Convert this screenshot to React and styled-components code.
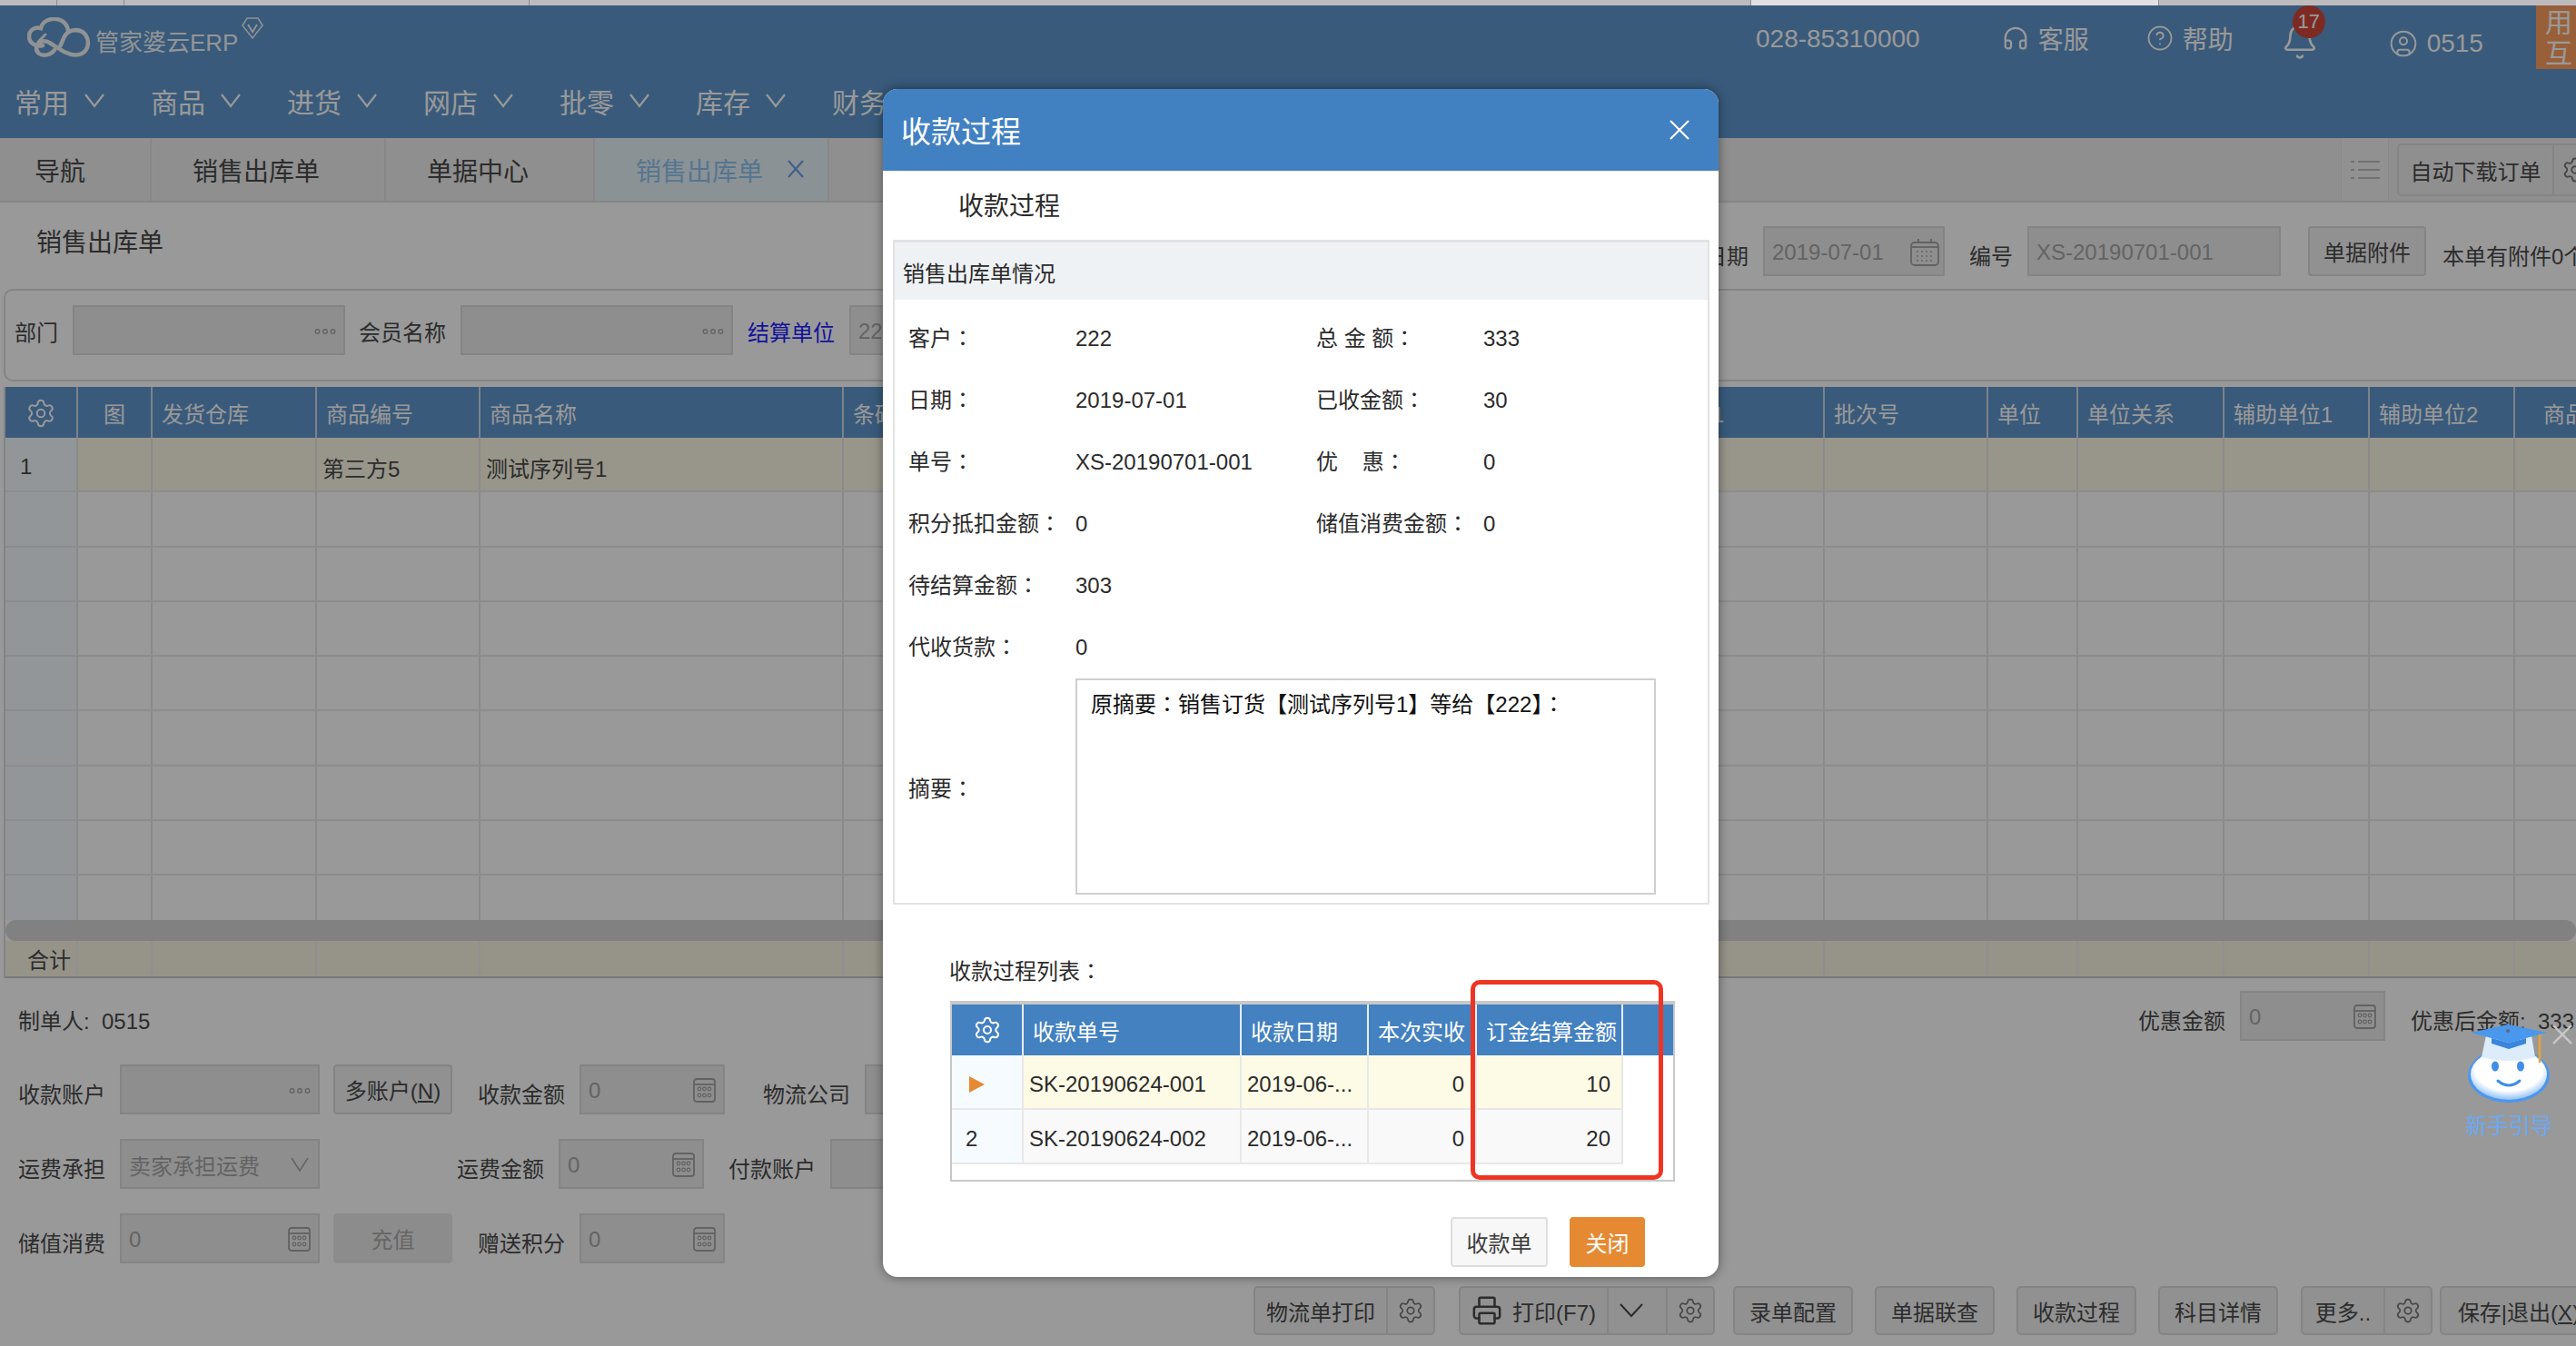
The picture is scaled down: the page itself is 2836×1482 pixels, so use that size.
import React from "react";
import styled, { createGlobalStyle, css } from "styled-components";
import { Settings, Headphones, CircleHelp, Bell, CircleUser, Printer } from "lucide-react";

const Global = createGlobalStyle`
  html, body { margin: 0; padding: 0; background: #fff; }
  * { box-sizing: border-box; }
  body { font-family: "Liberation Sans", "Noto Sans CJK SC", sans-serif; font-size: 24px; color: #4a4a4a; }
`;

const Screen = styled.div`
  width: 2836px; height: 1482px; overflow: hidden; display: flex; flex-direction: column;
`;
const TopStrip = styled.div`
  height: 6px; flex: none; display: flex; background: #bdbbbe;
`;
const StripTab = styled.div`
  width: ${p => p.$w}px; flex: none; border-right: 1px solid #8e8c90; background: ${p => (p.$light ? "#e2e0e2" : "transparent")};
`;
const Page = styled.div`
  position: relative; flex: 1; overflow: hidden; background: #fff; white-space: nowrap;
`;
const Overlay = styled.div`
  position: absolute; inset: 0; background: rgba(0, 0, 0, 0.4); z-index: 10;
`;

/* header */
const Header = styled.header`
  height: 146px; background: #5f96cd; color: #fff; display: flex; flex-direction: column;
`;
const HeaderTop = styled.div`
  height: 74px; display: flex; align-items: flex-start; position: relative;
`;
const Logo = styled.div`
  display: flex; align-items: flex-start; margin-left: 30px; padding-top: 13px; width: 270px;
`;
const LogoText = styled.span`
  font-size: 26px; margin: 7px 0 0 5px; color: #f4f8fb;
`;
const LogoBadge = styled.svg`
  margin: 0 0 0 4px; flex: none;
`;
const HeaderRight = styled.div`
  margin-left: auto; display: flex; align-items: flex-start; width: 903px; height: 70px;
`;
const HeaderItem = styled.div`
  display: flex; align-items: center; gap: ${p => p.$gap || 10}px; margin-left: ${p => p.$ml}px; margin-top: ${p => p.$mt || 17}px; font-size: 28px; position: relative; flex: none;
`;
const Badge = styled.span`
  position: absolute; left: 13px; top: -19px; width: 36px; height: 36px; border-radius: 50%; background: #d0483a; color: #fff; font-size: 22px; display: flex; align-items: center; justify-content: center;
`;
const Orange = styled.div`
  margin-left: auto; width: 44px; height: 70px; background: #ff9f5e; flex: none; overflow: hidden; font-size: 30px; line-height: 34px; padding: 2px 0 0 10px; white-space: normal; word-break: break-all; color: #fff;
`;
const Nav = styled.nav`
  height: 72px; display: flex; align-items: center; padding: 0 0 10px 16px;
`;
const NavItem = styled.div`
  width: 150px; flex: none; display: flex; align-items: center; gap: 17px; font-size: 30px;
`;

/* tabs */
const Tabs = styled.div`
  height: 71px; display: flex; background: #eee; border-bottom: 2px solid #dedede;
`;
const Tab = styled.div`
  position: relative; display: flex; align-items: center; font-size: 28px; color: ${p => (p.$active ? "#8fc4ee" : "#4a4a4a")}; padding: 0 71px 0 ${p => (p.$first ? 38 : 45)}px; border-right: 2px solid #e2e2e2; background: ${p => (p.$active ? "#e6f3fa" : "transparent")};
`;
const TabClose = styled.svg`
  position: absolute; right: 26px; top: 24px;
`;
const TabTools = styled.div`
  margin-left: auto; display: flex; width: 259px; flex: none; align-items: stretch;
`;
const ToolCell = styled.div`
  width: 53px; flex: none; background: #f2f2f2; display: flex; align-items: center; justify-content: center; border-left: 1px solid #e4e4e4; border-right: 1px solid #e4e4e4;
`;
const AutoButton = styled.div`
  margin: 6px 0 0 9px; height: 58px; flex: none; width: 210px; display: flex; border: 2px solid #dcdcdc; border-radius: 5px; font-size: 24px; color: #4a4a4a;
`;
const AutoLabel = styled.div`
  width: 171px; flex: none; display: flex; align-items: center; justify-content: center; border-right: 2px solid #dcdcdc;
`;
const AutoGear = styled.div`
  display: flex; align-items: center; padding-left: 8px;
`;

/* title */
const TitleRow = styled.div`
  height: 95px; display: flex; align-items: flex-start;
`;
const PageTitle = styled.div`
  margin: 28px 0 0 40px; font-size: 28px; line-height: 34px;
`;
const TitleRight = styled.div`
  margin-left: auto; width: 959px; flex: none; display: flex; align-items: center; padding-top: 26px; overflow: hidden;
`;
const FieldLabel = styled.span`
  flex: none; font-size: 24px; margin-top: 8px; margin-left: ${p => p.$ml || 0}px; margin-right: ${p => p.$mr ?? 16}px; color: ${p => (p.$link ? "#1f1fff" : "#4a4a4a")}; width: ${p => (p.$w ? p.$w + "px" : "auto")};
`;
const Field = styled.div`
  flex: none; width: ${p => p.$w}px; height: 55px; display: flex; align-items: center; justify-content: space-between; padding: 2px ${p => p.$pr || 8}px 0 8px; background: #ededed; border: 2px solid #dcdcdc; color: #a6a6a6; font-size: 24px; overflow: hidden;
`;
const PlainButton = styled.div`
  flex: none; width: ${p => p.$w}px; height: ${p => p.$h || 55}px; margin-left: ${p => p.$ml || 0}px; display: flex; align-items: center; justify-content: center; gap: ${p => p.$gap || 0}px; background: ${p => (p.$disabled ? "#eaeaea" : "#f2f2f2")}; border: 2px solid ${p => (p.$disabled ? "#eaeaea" : "#dcdcdc")}; border-radius: 4px; color: ${p => (p.$disabled ? "#aaa" : "#4a4a4a")}; font-size: 24px;
`;
const Hotkey = styled.span`
  text-decoration: underline;
`;

/* filter */
const FilterBox = styled.div`
  margin-left: 4px; height: 102px; display: flex; align-items: flex-start; padding: 16px 0 0 10px; border: 2px solid #dcdcdc; border-right: 0; border-radius: 10px 0 0 10px;
  & > span { margin-top: 11px; }
`;

/* data grid */
const gridColumns = css`
  display: grid; grid-template-columns: 80px 82px 181px 180px 400px 874px 206px 180px 99px 161px 160px 160px 120px;
`;
const DataGrid = styled.div`
  margin: 6px 0 0 4px; border-left: 2px solid #dcdcdc;
`;
const DataHead = styled.div`
  ${gridColumns}; height: 56px; background: #5f96cd; color: #fff;
`;
const HeadCell = styled.div`
  border-right: 2px solid #cfd9e4; display: flex; align-items: center; justify-content: ${p => (p.$center ? "center" : "flex-start")}; padding-left: ${p => (p.$center ? 0 : p.$pl || 10)}px; font-size: 24px; overflow: hidden; white-space: nowrap; padding-top: 1px;
`;
const DataBody = styled.div`
  height: 531px; overflow: hidden;
`;
const DataRow = styled.div`
  ${gridColumns}; height: 60.3px; border-bottom: 2px solid #e9e9e9; background: ${p => (p.$selected ? "#fdfbe6" : "#fff")};
`;
const DataCell = styled.div`
  border-right: 2px solid #e6e6e6; display: flex; align-items: center; padding: 6px 0 0 ${p => p.$pl ?? 3}px; font-size: 24px; background: ${p => (p.$index ? "#f5fbff" : "transparent")};
`;
const ScrollBar = styled.div`
  height: 23px; border-radius: 12px; background: #d8d8d8;
`;
const DataFoot = styled.div`
  ${gridColumns}; height: 41px; background: #fbf5e5; border-bottom: 2px solid #c8c8c8;
`;
const FootCell = styled.div`
  border-right: 2px solid #eee; display: flex; align-items: center; padding-left: ${p => p.$pl || 0}px; font-size: 24px; overflow: visible;
`;

/* form */
const FormTop = styled.div`
  margin-top: 14px; display: flex; align-items: center; height: 55px; padding-left: 20px;
`;
const Maker = styled.span`
  font-size: 24px; margin-top: 8px; flex: none; width: 2334px;
`;
const FormRow = styled.div`
  margin-top: ${p => p.$mt ?? 27}px; display: flex; align-items: center; height: 55px; padding-left: 20px;
`;
const ActionBar = styled.div`
  margin-top: 25px; padding-left: 1380px; display: flex; align-items: stretch; height: 54px;
`;
const ActionGroup = styled.div`
  flex: none; display: flex; margin-left: ${p => p.$ml || 0}px; border: 2px solid #dcdcdc; border-radius: 5px; background: #f2f2f2; font-size: 24px; color: #4a4a4a;
`;
const ActionPart = styled.div`
  flex: none; width: ${p => p.$w}px; display: flex; align-items: center; justify-content: center; gap: 11px; padding-right: ${p => p.$pr || 0}px; border-right: ${p => (p.$last ? "0" : "2px solid #dcdcdc")};
`;

/* mascot */
const Mascot = styled.div`
  position: absolute; left: 2710px; top: 1122px; width: 126px; z-index: 20; display: flex; flex-direction: column; align-items: center; padding-right: 22px;
`;
const MascotText = styled.span`
  margin-top: 6px; font-size: 24px; color: #6aa9f5;
`;
const MascotClose = styled.svg`
  position: absolute; right: 4px; top: 0;
`;

/* modal */
const Modal = styled.div`
  position: absolute; left: 972px; top: 92px; width: 920px; height: 1308px; background: #fff; border-radius: 16px; z-index: 30; overflow: hidden; box-shadow: 0 0 12px rgba(0, 0, 0, 0.45); color: #2b2b2b; white-space: normal;
`;
const ModalHead = styled.div`
  height: 90px; background: #4181c2; color: #fff; display: flex; align-items: center; justify-content: space-between; padding: 0 32px 0 20px; font-size: 33px;
`;
const ModalSub = styled.div`
  height: 76px; display: flex; align-items: center; padding: 0 0 2px 83px; font-size: 28px;
`;
const Panel = styled.section`
  margin: 0 10px 0 11px; height: 732px; border: 2px solid #e2e2e2; border-top-width: 3px;
`;
const PanelHead = styled.div`
  height: 63px; background: #eff2f5; display: flex; align-items: center; padding: 2px 0 0 9px; font-size: 24px;
`;
const InfoGrid = styled.div`
  padding: 9px 0 0 15px; display: grid; grid-template-columns: 184px 265px 184px 1fr; grid-auto-rows: 68px; align-items: center; font-size: 24px;
`;
const InfoText = styled.div`
  white-space: pre; color: #2b2b2b; line-height: 30px; height: 30px;
`;
const Colon = styled.span`
  font-family: "Noto Sans CJK TC", sans-serif; line-height: 0;
`;
const MemoRow = styled.div`
  display: grid; grid-template-columns: 184px 1fr; padding-left: 15px; align-items: center;
  & > div:first-child { margin-top: 6px; }
`;
const MemoBox = styled.div`
  width: 639px; height: 238px; border: 2px solid #cfcfcf; padding: 10px 15px; font-size: 24px; line-height: 34px; color: #111;
`;
const ListTitle = styled.div`
  margin: 57px 0 0 73px; height: 33px; line-height: 33px; font-size: 24px;
`;
const payColumns = css`
  display: grid; grid-template-columns: 79px 240px 140px 119px 161px 1fr;
`;
const PayGrid = styled.div`
  margin: 16px 0 0 74px; width: 798px; height: 199px; border: 2px solid #c8c8c8; border-top-width: 4px;
`;
const PayHead = styled.div`
  ${payColumns}; height: 56px; background: #4381c1; color: #fff;
`;
const PayHeadCell = styled.div`
  border-right: 2px solid #e8eef6; display: flex; align-items: center; justify-content: ${p => (p.$center ? "center" : "flex-start")}; padding-left: ${p => (p.$center ? 0 : p.$pl || 10)}px; font-size: 24px; white-space: nowrap; &:last-child { border-right: 0; }
`;
const PayRow = styled.div`
  ${payColumns}; height: 60px;
`;
const PayCell = styled.div`
  border-right: 2px solid #e8e8e8; border-bottom: 2px solid #e8e8e8; display: flex; align-items: center; justify-content: ${p => (p.$right ? "flex-end" : "flex-start")}; padding: 6px ${p => (p.$right ? 12 : 0)}px 0 ${p => (p.$right ? 0 : p.$pl ?? 6)}px; font-size: 24px; color: #2b2b2b; background: ${p => p.$bg || "transparent"}; white-space: nowrap;
`;
const PayBlank = styled.div``;
const Pointer = styled.span`
  width: 0; height: 0; border-left: 17px solid #e58a33; border-top: 9px solid transparent; border-bottom: 9px solid transparent;
`;
const RedMark = styled.div`
  position: absolute; left: 647px; top: 981px; width: 212px; height: 220px; border: 5px solid #ee3524; border-radius: 10px;
`;
const ModalFoot = styled.div`
  margin-top: 39px; display: flex; justify-content: flex-end; gap: 24px; padding-right: 81px;
`;
const SoftButton = styled.div`
  width: 107px; height: 55px; display: flex; align-items: center; justify-content: center; background: #f7f7f7; border: 2px solid #dedede; border-radius: 4px; font-size: 24px; color: #3c3c3c;
`;
const PrimaryButton = styled.div`
  width: 83px; height: 55px; display: flex; align-items: center; justify-content: center; background: #e58a33; border-radius: 4px; font-size: 24px; color: #fff;
`;

const Chevron = ({ w = 22, h = 14, color = "#fff", sw = 2.2 }) => (
  <svg width={w} height={h + 2} viewBox={`0 0 ${w} ${h + 2}`} fill="none" stroke={color} strokeWidth={sw}>
    <polyline points={`1,1 ${w / 2},${h} ${w - 1},1`} />
  </svg>
);
const Dots = () => (
  <svg width="24" height="8" viewBox="0 0 24 8" fill="none" stroke="#a8a8a8" strokeWidth="1.4">
    <circle cx="3.5" cy="4" r="2.3" /><circle cx="12" cy="4" r="2.3" /><circle cx="20.5" cy="4" r="2.3" />
  </svg>
);
const Calc = () => (
  <svg width="25" height="27" viewBox="0 0 25 27" fill="none" stroke="#a3a3a3" strokeWidth="1.8">
    <rect x="1" y="1" width="23" height="25" rx="3" />
    <line x1="1" y1="7" x2="24" y2="7" />
    {[7, 12.5, 18].map(x => [12, 19].map(y => <circle key={x + "-" + y} cx={x} cy={y} r="1.8" strokeWidth="1.2" />))}
  </svg>
);
const CalendarIcon = () => (
  <svg width="32" height="30" viewBox="0 0 32 30" fill="none" stroke="#a3a3a3" strokeWidth="1.8">
    <rect x="1" y="4" width="30" height="25" rx="4" />
    <line x1="1" y1="9" x2="31" y2="9" /><line x1="9" y1="0" x2="9" y2="5" /><line x1="23" y1="0" x2="23" y2="5" />
    {[8, 13, 18, 23].map(x => [14, 19, 24].map(y => <circle key={x + "-" + y} cx={x} cy={y} r="0.9" fill="#a3a3a3" stroke="none" />))}
  </svg>
);
const ListIcon = () => (
  <svg width="32" height="22" viewBox="0 0 32 22" fill="none" stroke="#bdbdbd" strokeWidth="2">
    <line x1="0" y1="2" x2="4" y2="2" /><line x1="8" y1="2" x2="32" y2="2" />
    <line x1="0" y1="11" x2="4" y2="11" /><line x1="8" y1="11" x2="32" y2="11" />
    <line x1="0" y1="20" x2="4" y2="20" /><line x1="8" y1="20" x2="32" y2="20" />
  </svg>
);
const LogoMark = () => (
  <svg width="70" height="44" viewBox="0 0 70 44" fill="none" stroke="#f0f3f6" strokeWidth="4.5" strokeLinecap="round">
    <path d="M17 31 C9 33 2 28 2 21 C2 14 9 10 15 12 C17 4 25 1 32 2 C40 3 45 9 45 16" />
    <path d="M30 36 C26 42 17 43 13 40 C8 36 10 29 15 27 C21 24 27 30 34 34 C41 39 52 44 60 40 C68 36 69 25 63 18 C57 12 46 13 41 21 C39 25 38 29 36 32" />
    <path d="M20 19 L12 27" strokeWidth="3" />
  </svg>
);
const XMark = ({ size = 22, color = "#fff", sw = 2.2 }) => (
  <svg width={size} height={size} viewBox="0 0 22 22" fill="none" stroke={color} strokeWidth={sw}>
    <line x1="1" y1="1" x2="21" y2="21" /><line x1="21" y1="1" x2="1" y2="21" />
  </svg>
);
const MascotArt = () => (
  <svg width="90" height="86" viewBox="0 0 90 86">
    <defs>
      <radialGradient id="mFace" cx="50%" cy="38%" r="62%">
        <stop offset="0%" stopColor="#ffffff" /><stop offset="72%" stopColor="#ffffff" /><stop offset="100%" stopColor="#8fbff4" />
      </radialGradient>
    </defs>
    <ellipse cx="45" cy="56" rx="45" ry="30" fill="#4a97ee" />
    <ellipse cx="45" cy="55" rx="42" ry="28" fill="url(#mFace)" />
    <path d="M20 12 L70 12 L74 36 Q45 44 15 36 Z" fill="#dcecfb" />
    <path d="M3 9 L44 0 L87 9 L45 20 Z" fill="#4a97ee" />
    <path d="M26 15 L45 20 L64 15 L64 21 L45 27 L26 21 Z" fill="#3a86dc" />
    <circle cx="44" cy="7" r="2" fill="#5f6a74" />
    <path d="M79 11 L79 42" stroke="#e6a43a" strokeWidth="2.5" fill="none" />
    <ellipse cx="30" cy="46" rx="4" ry="5.5" fill="#3f8fe6" />
    <ellipse cx="58" cy="46" rx="4" ry="5.5" fill="#3f8fe6" />
    <path d="M33 62 Q45 72 57 62" fill="none" stroke="#3f8fe6" strokeWidth="3" strokeLinecap="round" />
  </svg>
);

const navItems = ["常用", "商品", "进货", "网店", "批零", "库存", "财务"];
const heads = ["", "图", "发货仓库", "商品编号", "商品名称", "条码", "自定义1", "批次号", "单位", "单位关系", "辅助单位1", "辅助单位2", "商品"];
const blanks = Array.from({ length: 13 });
const infoRows = [
  ["客户", "222", "总 金 额", "333"],
  ["日期", "2019-07-01", "已收金额", "30"],
  ["单号", "XS-20190701-001", "优    惠", "0"],
  ["积分抵扣金额", "0", "储值消费金额", "0"],
  ["待结算金额", "303", "", ""],
  ["代收货款", "0", "", ""],
];
const payments = [
  { no: "SK-20190624-001", amount: "10", bg: "#fdfbe6", pointer: true },
  { no: "SK-20190624-002", amount: "20", bg: "#f9f9f9", index: "2" },
];
const Labelled = ({ text }) => (text ? <InfoText>{text}<Colon>：</Colon></InfoText> : <InfoText />);

export default function App() {
  return (
    <Screen>
      <Global />
      <TopStrip>
        <StripTab $w={63} /><StripTab $w={74} /><StripTab $w={446} /><StripTab $w={1345} /><StripTab $w={449} $light />
      </TopStrip>
      <Page>
        <Header>
          <HeaderTop>
            <Logo>
              <LogoMark />
              <LogoText>管家婆云ERP</LogoText>
              <LogoBadge width="24" height="24" viewBox="0 0 24 24" fill="none" stroke="#f0f3f6" strokeWidth="1.5">
                <path d="M6 1 L18 1 L23 9 L12 23 L1 9 Z" /><path d="M7 8 L12 16 L17 8" strokeWidth="2" />
              </LogoBadge>
            </Logo>
            <HeaderRight>
              <HeaderItem $ml={0} $mt={21}>028-85310000</HeaderItem>
              <HeaderItem $ml={90} $mt={16}><Headphones size={30} strokeWidth={1.8} />客服</HeaderItem>
              <HeaderItem $ml={63} $mt={16}><CircleHelp size={30} strokeWidth={1.5} />帮助</HeaderItem>
              <HeaderItem $ml={52} $mt={19}><Bell size={42} strokeWidth={1.5} /><Badge>17</Badge></HeaderItem>
              <HeaderItem $ml={77} $mt={26}><CircleUser size={32} strokeWidth={1.5} />0515</HeaderItem>
              <Orange>用互</Orange>
            </HeaderRight>
          </HeaderTop>
          <Nav>
            {navItems.map(n => (
              <NavItem key={n}>{n}<Chevron /></NavItem>
            ))}
          </Nav>
        </Header>

        <Tabs>
          <Tab $first>导航</Tab>
          <Tab>销售出库单</Tab>
          <Tab>单据中心</Tab>
          <Tab $active>
            销售出库单
            <TabClose width="18" height="20" viewBox="0 0 18 20" fill="none" stroke="#6f9fe8" strokeWidth="2.2">
              <line x1="1" y1="1" x2="17" y2="19" /><line x1="17" y1="1" x2="1" y2="19" />
            </TabClose>
          </Tab>
          <TabTools>
            <ToolCell><ListIcon /></ToolCell>
            <AutoButton>
              <AutoLabel>自动下载订单</AutoLabel>
              <AutoGear><Settings size={30} strokeWidth={1.5} color="#777" /></AutoGear>
            </AutoButton>
          </TabTools>
        </Tabs>

        <TitleRow>
          <PageTitle>销售出库单</PageTitle>
          <TitleRight>
            <FieldLabel>日期</FieldLabel>
            <Field $w={200} $pr={4}>2019-07-01<CalendarIcon /></Field>
            <FieldLabel $ml={27}>编号</FieldLabel>
            <Field $w={279}>XS-20190701-001</Field>
            <PlainButton $w={130} $ml={30}>单据附件</PlainButton>
            <FieldLabel $ml={18}>本单有附件0个</FieldLabel>
          </TitleRight>
        </TitleRow>

        <FilterBox>
          <FieldLabel $w={52} $mr={12}>部门</FieldLabel>
          <Field $w={300}><span /><Dots /></Field>
          <FieldLabel $ml={15}>会员名称</FieldLabel>
          <Field $w={300}><span /><Dots /></Field>
          <FieldLabel $ml={16} $link>结算单位</FieldLabel>
          <Field $w={200}>222</Field>
        </FilterBox>

        <DataGrid>
          <DataHead>
            {heads.map((h, i) => (
              <HeadCell key={i} $center={i < 2} $pl={i === 12 ? 31 : undefined}>
                {i === 0 ? <Settings size={34} strokeWidth={1.4} /> : h}
              </HeadCell>
            ))}
          </DataHead>
          <DataBody>
            {Array.from({ length: 9 }).map((_, r) => (
              <DataRow key={r} $selected={r === 0}>
                {blanks.map((_, c) => (
                  <DataCell key={c} $index={c === 0} $pl={c === 0 ? 16 : 6}>
                    {r === 0 && c === 0 ? "1" : r === 0 && c === 3 ? "第三方5" : r === 0 && c === 4 ? "测试序列号1" : ""}
                  </DataCell>
                ))}
              </DataRow>
            ))}
          </DataBody>
          <ScrollBar />
          <DataFoot>
            {blanks.map((_, c) => (
              <FootCell key={c} $pl={c === 0 ? 24 : 0}>{c === 0 ? "合计" : ""}</FootCell>
            ))}
          </DataFoot>
        </DataGrid>

        <FormTop>
          <Maker>制单人:&nbsp; 0515</Maker>
          <FieldLabel>优惠金额</FieldLabel>
          <Field $w={160}>0<Calc /></Field>
          <FieldLabel $ml={28} $mr={0}>优惠后金额:&nbsp; 333</FieldLabel>
        </FormTop>
        <FormRow $mt={26}>
          <FieldLabel>收款账户</FieldLabel>
          <Field $w={220}><span /><Dots /></Field>
          <PlainButton $w={131} $ml={15}><span>多账户(<Hotkey>N</Hotkey>)</span></PlainButton>
          <FieldLabel $ml={28}>收款金额</FieldLabel>
          <Field $w={160}>0<Calc /></Field>
          <FieldLabel $ml={42}>物流公司</FieldLabel>
          <Field $w={200}><span /></Field>
        </FormRow>
        <FormRow>
          <FieldLabel>运费承担</FieldLabel>
          <Field $w={220} $pr={10}>卖家承担运费<Chevron w={20} h={15} color="#a8a8a8" sw={1.6} /></Field>
          <FieldLabel $ml={151}>运费金额</FieldLabel>
          <Field $w={160}>0<Calc /></Field>
          <FieldLabel $ml={27}>付款账户</FieldLabel>
          <Field $w={200}><span /></Field>
        </FormRow>
        <FormRow>
          <FieldLabel>储值消费</FieldLabel>
          <Field $w={220}>0<Calc /></Field>
          <PlainButton $w={131} $ml={15} $disabled>充值</PlainButton>
          <FieldLabel $ml={28}>赠送积分</FieldLabel>
          <Field $w={160}>0<Calc /></Field>
        </FormRow>

        <ActionBar>
          <ActionGroup>
            <ActionPart $w={146}>物流单打印</ActionPart>
            <ActionPart $w={50} $last><Settings size={30} strokeWidth={1.4} color="#777" /></ActionPart>
          </ActionGroup>
          <ActionGroup $ml={26}>
            <ActionPart $w={163}><Printer size={34} strokeWidth={1.8} color="#4a4a4a" />打印(F7)</ActionPart>
            <ActionPart $w={65} $pr={14}><Chevron w={26} h={14} color="#4a4a4a" sw={2} /></ActionPart>
            <ActionPart $w={50} $last><Settings size={30} strokeWidth={1.4} color="#777" /></ActionPart>
          </ActionGroup>
          <ActionGroup $ml={20}><ActionPart $w={128} $last>录单配置</ActionPart></ActionGroup>
          <ActionGroup $ml={24}><ActionPart $w={128} $last>单据联查</ActionPart></ActionGroup>
          <ActionGroup $ml={24}><ActionPart $w={128} $last>收款过程</ActionPart></ActionGroup>
          <ActionGroup $ml={24}><ActionPart $w={128} $last>科目详情</ActionPart></ActionGroup>
          <ActionGroup $ml={25}>
            <ActionPart $w={91}>更多..</ActionPart>
            <ActionPart $w={50} $last><Settings size={30} strokeWidth={1.4} color="#777" /></ActionPart>
          </ActionGroup>
          <ActionGroup $ml={8}><ActionPart $w={170} $last><span>保存|退出(<Hotkey>X</Hotkey>)</span></ActionPart></ActionGroup>
        </ActionBar>

        <Overlay />

        <Mascot>
          <MascotClose width="22" height="22" viewBox="0 0 22 22" fill="none" stroke="#c9c9c9" strokeWidth="2.4">
            <line x1="1" y1="1" x2="21" y2="21" /><line x1="21" y1="1" x2="1" y2="21" />
          </MascotClose>
          <MascotArt />
          <MascotText>新手引导</MascotText>
        </Mascot>

        <Modal>
          <ModalHead>收款过程<XMark /></ModalHead>
          <ModalSub>收款过程</ModalSub>
          <Panel>
            <PanelHead>销售出库单情况</PanelHead>
            <InfoGrid>
              {infoRows.map(r => (
                <React.Fragment key={r[0]}>
                  <Labelled text={r[0]} />
                  <InfoText>{r[1]}</InfoText>
                  <Labelled text={r[2]} />
                  <InfoText>{r[3]}</InfoText>
                </React.Fragment>
              ))}
            </InfoGrid>
            <MemoRow>
              <Labelled text="摘要" />
              <MemoBox>原摘要<Colon>：</Colon>销售订货【测试序列号1】等给【222】<Colon>：</Colon></MemoBox>
            </MemoRow>
          </Panel>
          <ListTitle>收款过程列表<Colon>：</Colon></ListTitle>
          <PayGrid>
            <PayHead>
              <PayHeadCell $center><Settings size={32} strokeWidth={1.5} /></PayHeadCell>
              <PayHeadCell>收款单号</PayHeadCell>
              <PayHeadCell>收款日期</PayHeadCell>
              <PayHeadCell>本次实收</PayHeadCell>
              <PayHeadCell>订金结算金额</PayHeadCell>
              <PayHeadCell />
            </PayHead>
            {payments.map(p => (
              <PayRow key={p.no}>
                <PayCell $bg="#f5fbff" $pl={p.pointer ? 19 : 15}>{p.pointer ? <Pointer /> : p.index}</PayCell>
                <PayCell $bg={p.bg}>{p.no}</PayCell>
                <PayCell $bg={p.bg}>2019-06-...</PayCell>
                <PayCell $bg={p.bg} $right>0</PayCell>
                <PayCell $bg={p.bg} $right>{p.amount}</PayCell>
                <PayBlank />
              </PayRow>
            ))}
          </PayGrid>
          <RedMark />
          <ModalFoot>
            <SoftButton>收款单</SoftButton>
            <PrimaryButton>关闭</PrimaryButton>
          </ModalFoot>
        </Modal>
      </Page>
    </Screen>
  );
}
